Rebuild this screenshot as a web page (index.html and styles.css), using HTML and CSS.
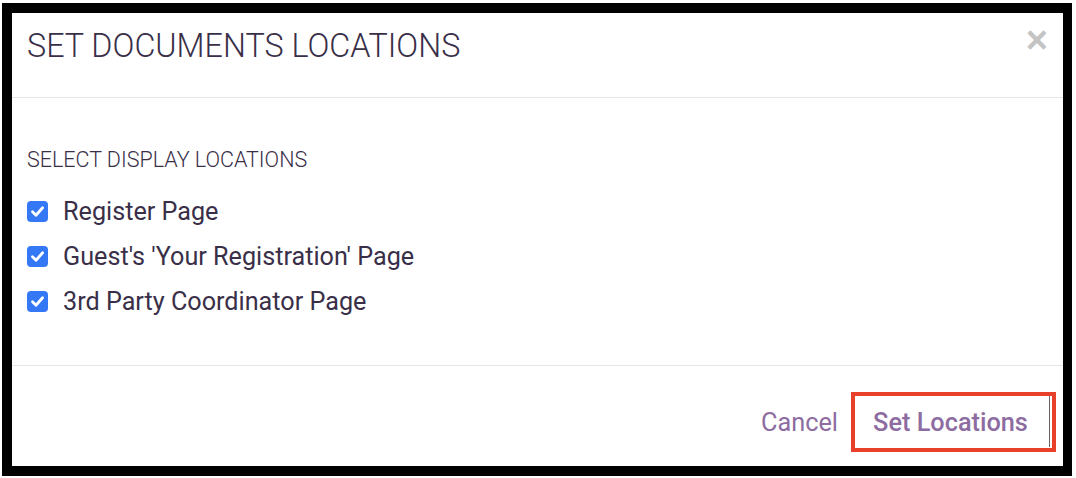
FILE: index.html
```html
<!DOCTYPE html>
<html>
<head>
<meta charset="utf-8">
<link rel="stylesheet" href="styles.css">
</head>
<body>
<div class="frame">
  <div class="modal">
    <div class="modal-header">
      <h1 class="title">SET DOCUMENTS LOCATIONS</h1>
      <span class="close">&times;</span>
    </div>
    <div class="modal-body">
      <div class="section-label">SELECT DISPLAY LOCATIONS</div>
      <ul class="options">
        <li class="option"><span class="check"><svg viewBox="0 0 21 21" width="21" height="21"><path d="M5.5 10.8 L9 14.2 L15.6 6.8" fill="none" stroke="#fff" stroke-width="2.8" stroke-linecap="round" stroke-linejoin="round"/></svg></span><span class="option-text">Register Page</span></li>
        <li class="option"><span class="check"><svg viewBox="0 0 21 21" width="21" height="21"><path d="M5.5 10.8 L9 14.2 L15.6 6.8" fill="none" stroke="#fff" stroke-width="2.8" stroke-linecap="round" stroke-linejoin="round"/></svg></span><span class="option-text">Guest's 'Your Registration' Page</span></li>
        <li class="option"><span class="check"><svg viewBox="0 0 21 21" width="21" height="21"><path d="M5.5 10.8 L9 14.2 L15.6 6.8" fill="none" stroke="#fff" stroke-width="2.8" stroke-linecap="round" stroke-linejoin="round"/></svg></span><span class="option-text">3rd Party Coordinator Page</span></li>
      </ul>
    </div>
    <div class="modal-footer">
      <span class="btn-cancel">Cancel</span>
      <span class="btn-primary">Set Locations</span>
    </div>
  </div>
</div>
</body>
</html>
```

FILE: styles.css
```css
* { box-sizing: border-box; }
html, body { margin: 0; padding: 0; background: #fff; }
body { font-family: Roboto, "Liberation Sans", sans-serif; color: #3a2f48; }

.frame {
  margin: 3px 0 0 2px;
  width: 1070px;
  height: 473px;
  border: 10px solid #000;
  border-right-width: 9px;
  background: #fff;
}
.modal { display: flex; flex-direction: column; height: 100%; }

.modal-header {
  height: 85px;
  border-bottom: 1px solid #e5e5e5;
  display: flex;
  align-items: flex-start;
  justify-content: space-between;
  padding: 17px 14px 0 15px;
}
.title {
  margin: 0;
  font-size: 32.3px;
  font-weight: 300;
  color: #3a2f48;
  line-height: 32px;
}
.close {
  font-size: 38px;
  font-weight: 700;
  color: #c4c4c4;
  line-height: 1;
  margin-top: -9px;
  margin-right: 1px;
  font-family: "Liberation Sans", Arial, sans-serif;
}

.modal-body {
  flex: 1;
  padding: 50px 15px 0 15px;
  border-bottom: 1px solid #e5e5e5;
}
.section-label {
  font-size: 21.5px;
  font-weight: 300;
  color: #3a2f48;
  line-height: 24px;
}
.options { list-style: none; margin: 17px 0 0 0; padding: 0; }
.option {
  display: flex;
  align-items: center;
  height: 45px;
}
.check {
  width: 21px;
  height: 21px;
  border-radius: 4px;
  background: #3478f6;
  display: flex;
  margin-right: 15px;
}
.option-text { font-size: 25.2px; color: #3a2f48; }

.modal-footer {
  height: 100px;
  display: flex;
  align-items: flex-start;
  justify-content: flex-end;
  padding: 26px 7px 0 0;
}
.btn-cancel {
  font-size: 25.3px;
  color: #8d6ca1;
  height: 60px;
  display: flex;
  align-items: center;
  margin-right: 13px;
}
.btn-primary {
  position: relative;
  width: 205px;
  height: 60px;
  border: 4px solid #e8412b;
  display: flex;
  align-items: center;
  justify-content: center;
  font-size: 25.3px;
  font-weight: 500;
  color: #8d6ca1;
  padding-right: 6px;
}
.btn-primary::after {
  content: "";
  position: absolute;
  right: 2px;
  top: 0;
  bottom: 1px;
  width: 1px;
  background: #666;
}
```
